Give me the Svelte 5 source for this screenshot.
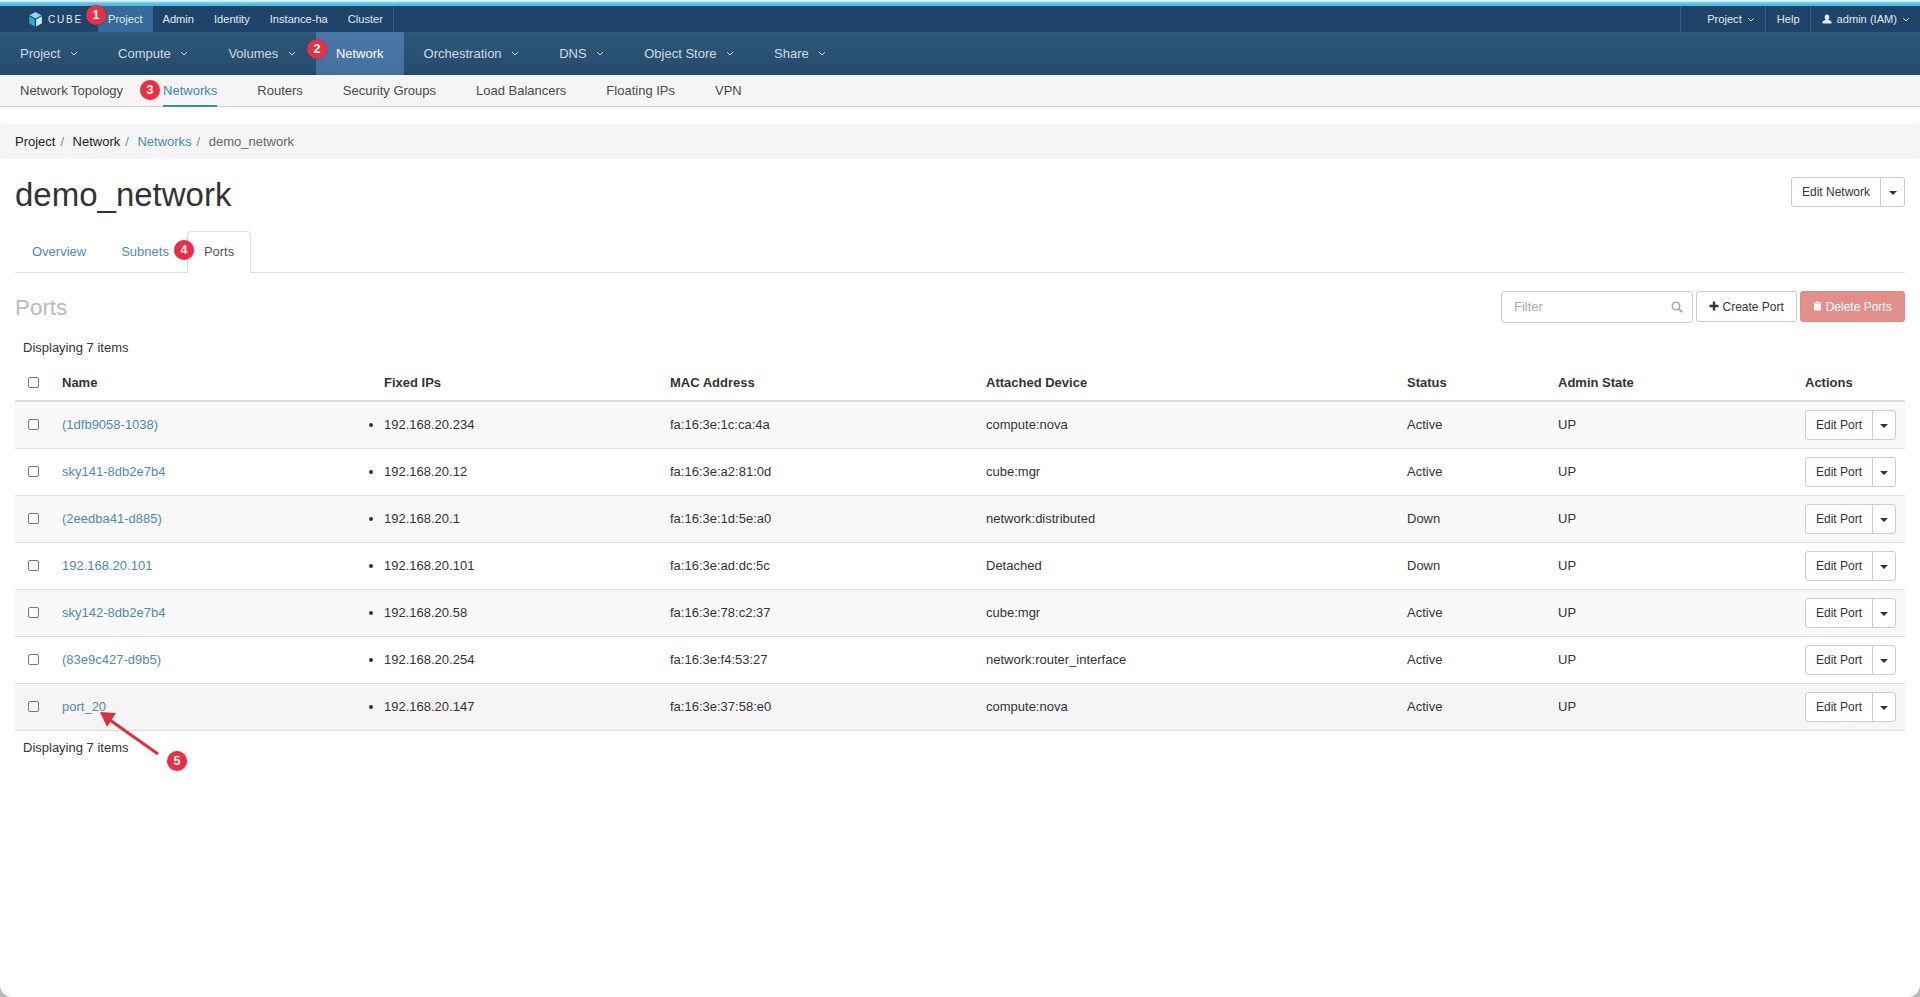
<script lang="ts">
  const topLinks = ['Project', 'Admin', 'Identity', 'Instance-ha', 'Cluster'];
  const mainNav = [
    { label: 'Project', caret: true },
    { label: 'Compute', caret: true },
    { label: 'Volumes', caret: true },
    { label: 'Network', caret: false, active: true },
    { label: 'Orchestration', caret: true },
    { label: 'DNS', caret: true },
    { label: 'Object Store', caret: true },
    { label: 'Share', caret: true }
  ];
  const subNav = ['Network Topology', 'Networks', 'Routers', 'Security Groups', 'Load Balancers', 'Floating IPs', 'VPN'];
  const columns = ['Name', 'Fixed IPs', 'MAC Address', 'Attached Device', 'Status', 'Admin State', 'Actions'];
  const ports = [
    { name: '(1dfb9058-1038)', ip: '192.168.20.234', mac: 'fa:16:3e:1c:ca:4a', device: 'compute:nova', status: 'Active' },
    { name: 'sky141-8db2e7b4', ip: '192.168.20.12', mac: 'fa:16:3e:a2:81:0d', device: 'cube:mgr', status: 'Active' },
    { name: '(2eedba41-d885)', ip: '192.168.20.1', mac: 'fa:16:3e:1d:5e:a0', device: 'network:distributed', status: 'Down' },
    { name: '192.168.20.101', ip: '192.168.20.101', mac: 'fa:16:3e:ad:dc:5c', device: 'Detached', status: 'Down' },
    { name: 'sky142-8db2e7b4', ip: '192.168.20.58', mac: 'fa:16:3e:78:c2:37', device: 'cube:mgr', status: 'Active' },
    { name: '(83e9c427-d9b5)', ip: '192.168.20.254', mac: 'fa:16:3e:f4:53:27', device: 'network:router_interface', status: 'Active' },
    { name: 'port_20', ip: '192.168.20.147', mac: 'fa:16:3e:37:58:e0', device: 'compute:nova', status: 'Active' }
  ];
</script>

{#snippet chevron()}
  <svg class="chevron" viewBox="0 0 8 5" width="8" height="5"><path d="M1 1l3 3 3-3" fill="none" stroke="currentColor" stroke-width="1"/></svg>
{/snippet}

<div class="page">
  <div class="strip"></div>

  <header class="topbar">
    <div class="brand">
      <svg viewBox="0 0 16 16" width="15" height="16">
        <path d="M8 .5l6.500 3.500L8 7.500 1.500 4z" fill="#8ad6ea"/>
        <path d="M1.200 5l6.100 3.400V16l-6.100-3.500z" fill="#2fa9d0"/>
        <path d="M14.800 5L8.700 8.400V16l6.100-3.500z" fill="#c9ecf4"/>
      </svg>
      <span>CUBE</span>
    </div>
    <nav class="toplinks">
      {#each topLinks as link, i}
        <a class:active={i === 0}>{link}</a>
      {/each}
    </nav>
    <div class="topright">
      <a>Project {@render chevron()}</a>
      <a>Help</a>
      <a>
        <svg viewBox="0 0 10 10" width="10" height="10"><path d="M5 .5c1.500 0 2.300 1 2.300 2.500S6.500 5.400 6.200 6c1.500.4 3.300 1 3.300 2v1.500H.5V8c0-1 1.800-1.600 3.300-2-.3-.6-1.100-1.500-1.100-3S3.500.5 5 .5z" fill="currentColor"/></svg>
        admin (IAM) {@render chevron()}
      </a>
    </div>
  </header>

  <nav class="mainnav">
    {#each mainNav as item}
      <a class:active={item.active}>{item.label}{#if item.caret}{@render chevron()}{/if}</a>
    {/each}
  </nav>

  <nav class="subnav">
    {#each subNav as item}
      <a class:active={item === 'Networks'}>{item}</a>
    {/each}
  </nav>

  <ol class="breadcrumb">
    <li>Project</li>
    <li>Network</li>
    <li><a>Networks</a></li>
    <li class="current">demo_network</li>
  </ol>

  <main class="content">
    <div class="title-row">
      <h1>demo_network</h1>
      <div class="btn-group big">
        <button class="btn">Edit Network</button>
        <button class="btn caret-btn"><span class="caret"></span></button>
      </div>
    </div>

    <div class="tabs">
      <a>Overview</a>
      <a>Subnets</a>
      <a class="active">Ports</a>
    </div>

    <div class="table-head">
      <h2>Ports</h2>
      <div class="actions">
        <div class="filter">
          <input type="text" placeholder="Filter" />
          <svg viewBox="0 0 12 12" width="12" height="12"><circle cx="5" cy="5" r="3.700" fill="none" stroke="#aaa" stroke-width="1.600"/><path d="M7.800 7.800l3.400 3.400" stroke="#aaa" stroke-width="1.900"/></svg>
        </div>
        <button class="btn create">
          <svg viewBox="0 0 10 10" width="10" height="10"><path d="M5 .5v9M.5 5h9" stroke="#333" stroke-width="2.400"/></svg>
          Create Port
        </button>
        <button class="btn delete">
          <svg viewBox="0 0 10 11" width="9" height="10"><path d="M3.500 1.500V.5h3v1H9.500v1.200H.5V1.500zM1.200 3.400h7.600V10.500H1.200z" fill="#fff"/></svg>
          Delete Ports
        </button>
      </div>
    </div>

    <div class="count">Displaying 7 items</div>

    <table>
      <colgroup>
        <col style="width: 39px" />
        <col style="width: 322px" />
        <col style="width: 286px" />
        <col style="width: 316px" />
        <col style="width: 421px" />
        <col style="width: 151px" />
        <col style="width: 247px" />
        <col style="width: 108px" />
      </colgroup>
      <thead>
        <tr>
          <th class="cb"><input type="checkbox" /></th>
          {#each columns as col}
            <th>{col}</th>
          {/each}
        </tr>
      </thead>
      <tbody>
        {#each ports as port, i}
          <tr class:hover={i === 6}>
            <td class="cb"><input type="checkbox" /></td>
            <td><a>{port.name}</a></td>
            <td><ul><li>{port.ip}</li></ul></td>
            <td>{port.mac}</td>
            <td>{port.device}</td>
            <td>{port.status}</td>
            <td>UP</td>
            <td class="row-actions">
              <div class="btn-group">
                <button class="btn">Edit Port</button>
                <button class="btn caret-btn"><span class="caret"></span></button>
              </div>
            </td>
          </tr>
        {/each}
      </tbody>
    </table>

    <div class="count bottom">Displaying 7 items</div>
  </main>

  <!-- tutorial markers drawn over the screenshot -->
  <span class="badge" style="left: 96px; top: 15px">1</span>
  <span class="badge" style="left: 317px; top: 49px">2</span>
  <span class="badge" style="left: 150px; top: 90px">3</span>
  <span class="badge" style="left: 184px; top: 250px">4</span>
  <span class="badge" style="left: 177px; top: 761px">5</span>
  <svg class="arrow" viewBox="0 0 70 50" width="70" height="50">
    <path d="M60 45L9 9" stroke="#d8323f" stroke-width="3" fill="none"/>
    <path d="M2 3l16 1-9 14z" fill="#d8323f"/>
  </svg>
</div>

<style>
  :global(body) {
    margin: 0;
    background: #b9b9b9;
  }

  .page {
    position: relative;
    height: 997px;
    overflow: hidden;
    background: #fff;
    border-radius: 0 0 12px 12px;
    font-family: "Liberation Sans", Arial, sans-serif;
    font-size: 13px;
    color: #333;
  }

  a {
    color: #4f8aae;
    text-decoration: none;
  }

  .strip {
    height: 6px;
    background: linear-gradient(#d8f2fa 0, #d8f2fa 1px, #63c5e6 3px, #4fb4da 6px);
  }

  .topbar {
    display: flex;
    align-items: stretch;
    height: 26px;
    background: #1f4469;
    color: #dfe7ee;
    font-size: 11.100px;
  }

  .topbar a {
    display: flex;
    align-items: center;
    color: #e3eaf0;
    padding: 0 10px;
  }

  .brand {
    display: flex;
    align-items: center;
    gap: 5px;
    padding-left: 28px;
    width: 70px;
    font-size: 10px;
    letter-spacing: 1.800px;
    color: #e6edf2;
  }

  .toplinks {
    display: flex;
    border-right: 1px solid #33608a;
  }

  .toplinks a.active {
    background: #356a9a;
  }

  .topright {
    display: flex;
    margin-left: auto;
  }

  .topright a {
    gap: 5px;
    padding: 0 10px 0 11px;
    border-left: 1px solid #33608a;
  }

  .topright a:first-child {
    padding-left: 26px;
  }

  .mainnav {
    display: flex;
    height: 43px;
    background: linear-gradient(#2f5877, #234b6f);
    box-shadow: inset 0 1px 0 #2f5d80;
  }

  .mainnav a {
    display: flex;
    align-items: center;
    padding: 0 20px 1px;
    color: #cfdbe5;
  }

  .mainnav a.active {
    color: #fff;
    background: linear-gradient(#4a78a9, #44709f);
  }

  .mainnav .chevron {
    margin-left: 9.600px;
  }

  .subnav {
    display: flex;
    height: 32px;
    background: #f5f5f5;
    border-bottom: 1px solid #cfcfcf;
    box-sizing: border-box;
  }

  .subnav a {
    display: flex;
    align-items: center;
    margin: 0 20px -1px;
    color: #4a4a4a;
    border-bottom: 2px solid transparent;
  }

  .subnav a.active {
    color: #3a86a6;
    border-bottom-color: #3a8fa8;
  }

  .breadcrumb {
    display: flex;
    list-style: none;
    height: 34px;
    margin: 17px 0 0;
    padding: 0 15px 1px;
    align-items: center;
    background: #f5f5f5;
    border-radius: 4px;
    color: #222;
  }

  .breadcrumb li + li::before {
    content: "/";
    color: #888;
    padding: 0 8.500px 0 5px;
  }

  .breadcrumb .current {
    color: #666;
  }

  .content {
    padding: 0 15px;
  }

  .title-row {
    display: flex;
    justify-content: space-between;
    align-items: flex-start;
    height: 72px;
  }

  h1 {
    margin: 17px 0 0;
    font-size: 33px;
    font-weight: 400;
    line-height: 37px;
    color: #333;
  }

  .btn-group {
    display: flex;
  }

  .btn-group.big {
    margin-top: 18px;
  }

  .btn-group.big .caret-btn {
    width: 25px;
  }

  .btn {
    font: inherit;
    font-size: 12px;
    height: 30px;
    padding: 0 10px;
    background: #fff;
    color: #333;
    border: 1px solid #ccc;
    border-radius: 3px;
  }

  .btn-group .btn:first-child {
    border-radius: 3px 0 0 3px;
  }

  .caret-btn {
    width: 24px;
    padding: 0;
    margin-left: -1px;
    border-radius: 0 3px 3px 0 !important;
  }

  .caret {
    display: inline-block;
    vertical-align: middle;
    border-top: 4px solid #333;
    border-left: 4px solid transparent;
    border-right: 4px solid transparent;
  }

  .tabs {
    display: flex;
    height: 41px;
    border-bottom: 1px solid #ddd;
  }

  .tabs a {
    display: flex;
    align-items: center;
    margin-right: 1px;
    padding: 0 16px 2px;
    border: 1px solid transparent;
    border-bottom: none;
  }

  .tabs a.active {
    color: #555;
    background: #fff;
    border-color: #ddd;
    border-radius: 4px 4px 0 0;
    margin-bottom: -1px;
  }

  .table-head {
    display: flex;
    justify-content: space-between;
    margin-top: 18px;
    height: 33px;
  }

  h2 {
    margin: 0;
    font-size: 22.400px;
    line-height: 33px;
    font-weight: 400;
    color: #bbb;
  }

  .actions {
    display: flex;
    gap: 3px;
  }

  .filter {
    position: relative;
    width: 192px;
  }

  .filter input {
    width: 100%;
    height: 32px;
    box-sizing: border-box;
    padding: 0 30px 2px 12px;
    border: 1px solid #ccc;
    border-radius: 4px;
    font: inherit;
  }

  .filter input::placeholder {
    color: #aaa;
  }

  .filter svg {
    position: absolute;
    right: 10px;
    top: 10px;
  }

  .create {
    width: 101px;
    height: 31px;
    padding: 0;
  }

  .delete {
    width: 105px;
    height: 31px;
    padding: 0;
    color: #fff;
    background: #e28f8c;
    border-color: #dc8a86;
  }

  .count {
    padding: 16px 8px 0;
    height: 33px;
    line-height: 15px;
    box-sizing: border-box;
  }

  .count.bottom {
    padding-top: 9px;
  }

  table {
    width: 1890px;
    margin-top: 7px;
    table-layout: fixed;
    border-collapse: collapse;
  }

  th {
    height: 36px;
    padding: 0 8px;
    text-align: left;
    font-weight: 700;
    border-bottom: 2px solid #ddd;
  }

  td {
    height: 44px;
    padding: 0 8px 2px;
    border-bottom: 1px solid #ddd;
  }

  td.row-actions {
    height: 46px;
    padding-bottom: 0;
  }

  tbody tr:nth-child(odd) {
    background: #f9f9f9;
  }

  tbody tr.hover {
    background: #f5f5f5;
  }

  th.cb {
    padding: 0 0 0 8px;
  }

  td.cb {
    padding: 0 0 2px 8px;
  }

  .cb input {
    appearance: none;
    display: block;
    box-sizing: border-box;
    width: 11px;
    height: 11px;
    margin: 0 0 0 5px;
    background: #fff;
    border: 1px solid #767676;
    border-radius: 2px;
  }

  ul {
    margin: 0;
    padding: 0;
  }

  .badge {
    position: absolute;
    width: 20px;
    height: 20px;
    margin: -10px 0 0 -10px;
    border-radius: 50%;
    background: #e82f45;
    color: #fff;
    font-size: 12.500px;
    font-weight: 700;
    line-height: 20px;
    text-align: center;
    box-shadow: 0 0 2px rgba(0, 0, 0, 0.25);
  }

  .arrow {
    position: absolute;
    left: 98px;
    top: 709px;
  }
</style>
